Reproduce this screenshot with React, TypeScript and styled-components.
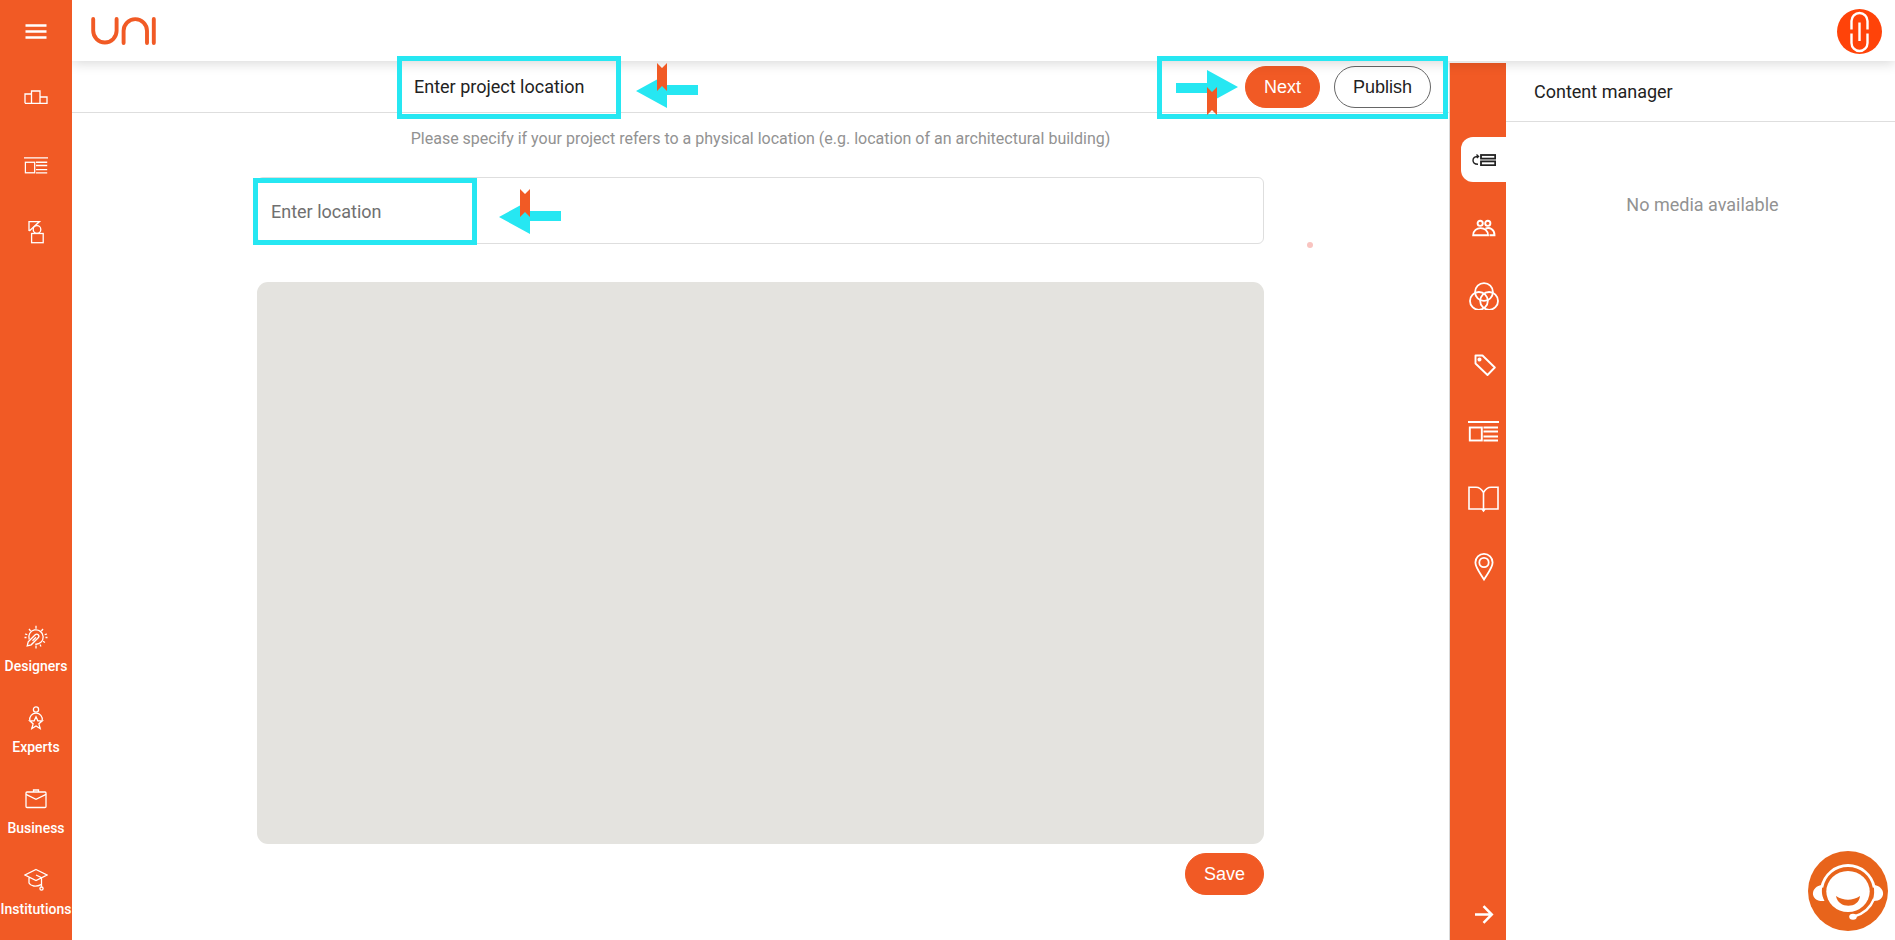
import React from "react";
import styled, { createGlobalStyle, css } from "styled-components";

const orange = "#f15a25";
const cyan = "#26e7f2";
const line = "#dedede";

const GlobalStyle = createGlobalStyle`
  *, *::before, *::after { box-sizing: border-box; }
  body {
    margin: 0;
    background: #fff;
    color: #222;
    font: 400 18px/24px Roboto, "Liberation Sans", sans-serif;
  }
  h1, h2, p { margin: 0; font-size: 18px; font-weight: 400; }
  button { font: inherit; cursor: pointer; border: 0; padding: 0; background: none; }
  svg { display: block; flex: none; }
`;

const Page = styled.div`
  display: grid;
  grid-template-columns: 72px minmax(0, 1fr);
  min-height: 100vh;
`;

const Sidebar = styled.nav`
  display: flex;
  flex-direction: column;
  justify-content: space-between;
  background: ${orange};
  color: #fff;
  padding: 9px 0 19px;
`;

const SideGroup = styled.div<{ $gap: number }>`
  display: flex;
  flex-direction: column;
  align-items: center;
  gap: ${(p) => p.$gap}px;
`;

const MenuButton = styled.button`
  display: grid;
  place-items: center;
  width: 44px;
  height: 44px;
  color: #fff;
`;

const SideLink = styled.a`
  display: flex;
  flex-direction: column;
  align-items: center;
  justify-content: center;
  gap: 5px;
  min-height: 44px;
  color: #fff;
  text-decoration: none;
  font-size: 14px;
  font-weight: 500;
  line-height: 24px;
`;

const Workspace = styled.div`
  display: flex;
  flex-direction: column;
  min-width: 0;
`;

const Header = styled.header`
  position: relative;
  z-index: 2;
  display: flex;
  align-items: center;
  justify-content: space-between;
  height: 61px;
  padding: 2px 13px 0 18px;
  background: #fff;
  box-shadow: 0 2px 12px rgba(0, 0, 0, 0.16);
  clip-path: inset(0 0 -24px 0);
`;

const Body = styled.div`
  display: flex;
  flex: 1;
`;

const Main = styled.main`
  display: flex;
  flex-direction: column;
  flex: 1;
  min-width: 0;
`;

const Toolbar = styled.div`
  display: grid;
  grid-template-columns: 1fr minmax(0, 693px) 1fr;
  height: 52px;
  padding-top: 1px;
  border-bottom: 1px solid ${line};
`;

const TitleBlock = styled.div`
  position: relative;
  grid-column: 2;
  display: flex;
  align-items: center;
`;

const Actions = styled.div`
  position: relative;
  display: flex;
  align-items: center;
  justify-content: flex-end;
  gap: 14px;
  padding-right: 18px;
`;

const PillButton = styled.button<{ $outline?: boolean }>`
  height: 42px;
  padding: 0 18px;
  border: 1px solid ${orange};
  border-radius: 21px;
  background: ${orange};
  color: #fff;
  font-family: "Liberation Sans", Arial, sans-serif;
  ${(p) =>
    p.$outline &&
    css`
      border-color: #666;
      background: #fff;
      color: #222;
    `}
`;

const Content = styled.section`
  display: flex;
  flex-direction: column;
  flex: 1;
  width: 100%;
  max-width: 1007px;
  margin: 0 auto;
  padding: 14px 0 45px;
`;

const Hint = styled.p`
  color: #929292;
  font-size: 16px;
  text-align: center;
`;

const Field = styled.div`
  position: relative;
  margin: 26px 0 38px;
`;

const LocationInput = styled.input`
  display: block;
  width: 100%;
  height: 67px;
  padding: 2px 13px 0;
  border: 1px solid ${line};
  border-radius: 6px;
  background: #fff;
  color: #222;
  font: inherit;
  &::placeholder { color: #707070; opacity: 1; }
`;

const MapArea = styled.div`
  flex: 1;
  min-height: 320px;
  border-radius: 11px;
  background: #e4e3df;
`;

const SaveRow = styled.div`
  display: flex;
  justify-content: flex-end;
  margin-top: 9px;
`;

const Callout = styled.div<{ $top: number; $left?: number; $right?: number; $width: number; $height: number }>`
  position: absolute;
  z-index: 3;
  top: ${(p) => p.$top}px;
  left: ${(p) => (p.$left === undefined ? "auto" : `${p.$left}px`)};
  right: ${(p) => (p.$right === undefined ? "auto" : `${p.$right}px`)};
  width: ${(p) => p.$width}px;
  height: ${(p) => p.$height}px;
  border: 5px solid ${cyan};
  pointer-events: none;
`;

const Pointer = styled.svg<{ $top: number; $left: number; $flip?: boolean }>`
  position: absolute;
  z-index: 3;
  top: ${(p) => p.$top}px;
  left: ${(p) => p.$left}px;
  transform: ${(p) => (p.$flip ? "rotate(180deg)" : "none")};
`;

const CursorDot = styled.span`
  position: absolute;
  top: 65px;
  right: -49px;
  width: 6px;
  height: 6px;
  border-radius: 50%;
  background: #f9c4c0;
`;

const Rail = styled.nav`
  display: flex;
  flex-direction: column;
  align-items: flex-end;
  gap: 23px;
  width: 57px;
  margin-top: 2px;
  padding: 74px 0 3px;
  border-left: 1px solid #d9d9d9;
  background: ${orange};
`;

const RailButton = styled.button<{ $active?: boolean; $last?: boolean }>`
  display: grid;
  place-items: center;
  width: 45px;
  height: 45px;
  border-radius: 12px 0 0 12px;
  color: ${(p) => (p.$active ? "#222" : "#fff")};
  background: ${(p) => (p.$active ? "#fff" : "transparent")};
  margin-top: ${(p) => (p.$last ? "auto" : "0")};
`;

const Panel = styled.aside`
  width: 389px;
`;

const PanelTitle = styled.h2`
  height: 61px;
  padding: 19px 28px 0;
  border-bottom: 1px solid ${line};
`;

const EmptyNote = styled.p`
  padding: 71px 0 0 4px;
  color: #929292;
  text-align: center;
`;

const SupportButton = styled.button`
  position: fixed;
  z-index: 4;
  right: 7px;
  bottom: 9px;
  width: 80px;
  height: 80px;
`;

type IconProps = { w: number; h: number; sw?: number; children: React.ReactNode };
const Icon = ({ w, h, sw = 1.3, children }: IconProps) => (
  <svg width={w} height={h} viewBox={`0 0 ${w} ${h}`} fill="none" stroke="currentColor" strokeWidth={sw} aria-hidden="true">
    {children}
  </svg>
);

const PodiumIcon = () => (
  <Icon w={24} h={16}>
    <path d="M1 13.300V4h6.500M7.500 13.300V1H16v12.300M16 7h7v6.300H1" />
  </Icon>
);
const ShapesIcon = () => (
  <Icon w={16} h={24}>
    <path d="M1 11V1.600h10.500L1.300 11" />
    <circle cx="9" cy="9.500" r="3.800" />
    <rect x="3.600" y="13.500" width="11.600" height="9.200" />
  </Icon>
);
const NewsIcon = ({ large = false }: { large?: boolean }) => (
  <svg width={large ? 31 : 24} height={large ? 21 : 17} viewBox="0 0 31 21" preserveAspectRatio="none" fill="none" stroke="currentColor" strokeWidth={large ? 1.9 : 1.6} aria-hidden="true">
    <path d="M0 1h31M15.500 6.500H30M15.500 10.500H30M15.500 15.500H30M15.500 19.500H30" />
    <rect x="1.800" y="6.500" width="12" height="13" />
  </svg>
);
const DesignerIcon = () => (
  <Icon w={24} h={24}>
    <path d="M5.200 14.500a7.200 7.200 0 1 1 6 4.700M12 .8v3M5 4l1.600 2M19 4l-1.600 2M1 9l2.300.7M23 9l-2.300.7M.5 12.500h2M21.500 12.500h2M21 17.500l-2-1.300M17 21.500l-1-2M12 20.500v3" />
    <path d="M3.200 20.800l1-4 7-7a2 2 0 0 1 3 3l-7 7-4 1zM8.500 15.800l3.500-3.500" />
  </Icon>
);
const ExpertIcon = () => (
  <Icon w={16} h={24}>
    <circle cx="8" cy="3.500" r="2.600" />
    <path d="M1.800 14.500a6.300 6.300 0 1 1 12.400 0" />
    <path d="M8 10.800l1.800 4h4.500l-3.400 3 1.300 4.700L8 20l-4.200 2.500 1.300-4.700-3.400-3h4.500z" />
  </Icon>
);
const BusinessIcon = () => (
  <Icon w={22} h={20}>
    <rect x="1" y="3" width="20" height="15.500" rx="1" />
    <path d="M8.500 3V1h5v2M1 5.300l10 5 10-5" />
  </Icon>
);
const InstitutionIcon = () => (
  <Icon w={24} h={24}>
    <path d="M12 1.500L23 7l-11 5.500L1 7zM12 7l5.500 2.600v9.200M5 9.800V15c1.500 3.200 7 4.300 12 1.600" />
    <circle cx="17.500" cy="20.600" r="1.600" />
  </Icon>
);
const ReorderIcon = () => (
  <Icon w={24} h={12} sw={1.8}>
    <rect x="9" y="1" width="14.200" height="3.600" />
    <rect x="9" y="7.400" width="14.200" height="3.800" />
    <path d="M6 10.200C2.800 10.200 1 8.500 1 6.200S2.800 2.400 6.500 2.400M4.500 .6L6.500 2.400 4.800 4" strokeWidth="1.400" />
  </Icon>
);
const PeopleIcon = () => (
  <Icon w={24} h={18} sw={1.9}>
    <circle cx="8.200" cy="4.300" r="2.600" />
    <circle cx="15.800" cy="4.300" r="2.600" />
    <path d="M1.200 16.200c0-9.500 14.800-9.500 14.800 0zM13.500 9.600c4-1.800 9 .8 9 6.600h-5" />
  </Icon>
);
const CirclesIcon = () => (
  <Icon w={30} h={28} sw={1.8}>
    <circle cx="15" cy="10" r="8.900" />
    <circle cx="9.900" cy="18.900" r="8.900" />
    <circle cx="20.100" cy="18.900" r="8.900" />
  </Icon>
);
const TagIcon = () => (
  <Icon w={24} h={24} sw={1.9}>
    <path d="M3.500 3.500h7l12.300 12-7.300 7.500L3.500 11.500z" strokeLinejoin="round" />
    <circle cx="7.500" cy="7.500" r="1.100" fill="currentColor" />
  </Icon>
);
const BookIcon = () => (
  <Icon w={31} h={27} sw={1.6}>
    <path d="M15.500 6.500C13 2 11 1.200 8 1.200H1v21.800h13l1.500 2 1.500-2h13V1.200h-7c-3 0-5 .8-7.500 5.300zV25" />
  </Icon>
);
const PinIcon = () => (
  <Icon w={20} h={30} sw={1.8}>
    <path d="M10 26.500C6 20 1.400 14.500 1.400 9.500a8.600 8.600 0 0 1 17.200 0c0 5-4.600 10.500-8.600 17z" />
    <circle cx="10" cy="9.500" r="4.700" />
  </Icon>
);
const ArrowIcon = () => (
  <Icon w={20} h={20} sw={2.5}>
    <path d="M1 9.500h17M9.500 1.200L17.800 9.500l-8.300 8.300" />
  </Icon>
);

const PointerArrow = (p: { top: number; left: number; flip?: boolean }) => (
  <Pointer $top={p.top} $left={p.left} $flip={p.flip} width="62" height="46" viewBox="0 0 62 46" aria-hidden="true">
    <path d="M0 28L31 11v11h31v10H31v13z" fill={cyan} />
    <path d="M21 0l5 5 5-5v28l-5-5-5 5z" fill={orange} />
  </Pointer>
);

const people = [
  { label: "Designers", icon: <DesignerIcon /> },
  { label: "Experts", icon: <ExpertIcon /> },
  { label: "Business", icon: <BusinessIcon /> },
  { label: "Institutions", icon: <InstitutionIcon /> },
];

const tools = [
  { label: "Arrange content", icon: <ReorderIcon /> },
  { label: "Team", icon: <PeopleIcon /> },
  { label: "Categories", icon: <CirclesIcon /> },
  { label: "Tags", icon: <TagIcon /> },
  { label: "Details", icon: <NewsIcon large /> },
  { label: "Publications", icon: <BookIcon /> },
  { label: "Location", icon: <PinIcon /> },
];

const IconSlot = styled.span`
  display: grid;
  place-items: center;
  height: 24px;
`;

export default function App() {
  return (
    <>
      <GlobalStyle />
      <Page>
        <Sidebar aria-label="Site">
          <SideGroup $gap={23}>
            <MenuButton aria-label="Menu">
              <Icon w={22} h={16} sw={2.4}>
                <path d="M.5 2.500h21M.5 8.500h21M.5 14.500h21" />
              </Icon>
            </MenuButton>
            <SideLink href="#competitions" aria-label="Competitions"><PodiumIcon /></SideLink>
            <SideLink href="#journal" aria-label="Journal"><NewsIcon /></SideLink>
            <SideLink href="#projects" aria-label="Projects"><ShapesIcon /></SideLink>
          </SideGroup>
          <SideGroup $gap={28}>
            {people.map((item) => (
              <SideLink key={item.label} href={`#${item.label.toLowerCase()}`}>
                <IconSlot>{item.icon}</IconSlot>
                {item.label}
              </SideLink>
            ))}
          </SideGroup>
        </Sidebar>

        <Workspace>
          <Header>
            <a href="#home" aria-label="Home">
              <svg width="68" height="30" viewBox="0 0 68 30" fill="none" stroke={orange} strokeWidth="3.900" strokeLinecap="round">
                <path d="M3.200 2v11.800a11.700 11.700 0 0 0 23.400 0V2M33.600 26V13.800a11.700 11.700 0 0 1 23.400 0V26M63.800 2v24" />
              </svg>
            </a>
            <button aria-label="Account">
              <svg width="45" height="45" viewBox="0 0 45 45" fill="none" stroke="#fff" strokeWidth="2.400">
                <circle cx="22.500" cy="22.500" r="22.500" fill="#ff4309" stroke="none" />
                <path d="M14.500 20.500V12a8 8 0 0 1 16 0v8.500M14.500 24.500V34a8 8 0 0 0 16 0v-9.500M22.500 13.500v18.500" />
              </svg>
            </button>
          </Header>

          <Body>
            <Main>
              <Toolbar>
                <TitleBlock>
                  <h1>Enter project location</h1>
                  <Callout $top={-6} $left={-17} $width={224} $height={63} />
                  <PointerArrow top={1} left={222} />
                </TitleBlock>
                <Actions>
                  <PillButton>Next</PillButton>
                  <PillButton $outline>Publish</PillButton>
                  <Callout $top={-6} $right={1} $width={291} $height={63}>
                    <PointerArrow top={8} left={14} flip />
                  </Callout>
                </Actions>
              </Toolbar>

              <Content>
                <Hint id="location-hint">
                  Please specify if your project refers to a physical location (e.g. location of an architectural building)
                </Hint>
                <Field>
                  <LocationInput aria-label="Location" aria-describedby="location-hint" placeholder="Enter location" />
                  <Callout $top={1} $left={-4} $width={224} $height={67} />
                  <PointerArrow top={12} left={242} />
                  <CursorDot />
                </Field>
                <MapArea role="region" aria-label="Map" />
                <SaveRow>
                  <PillButton>Save</PillButton>
                </SaveRow>
              </Content>
            </Main>

            <Rail aria-label="Project sections">
              {tools.map((tool, i) => (
                <RailButton key={tool.label} aria-label={tool.label} $active={i === 0}>{tool.icon}</RailButton>
              ))}
              <RailButton aria-label="Continue" $last><ArrowIcon /></RailButton>
            </Rail>

            <Panel>
              <PanelTitle>Content manager</PanelTitle>
              <EmptyNote>No media available</EmptyNote>
            </Panel>
          </Body>
        </Workspace>

        <SupportButton aria-label="Support">
          <svg width="80" height="80" viewBox="0 0 80 80" fill="none">
            <circle cx="40" cy="40" r="40" fill="#e8641b" />
            <ellipse cx="40" cy="40.500" rx="21.700" ry="20.500" fill="#fff" />
            <path d="M28 45c8 5 16 5 24 0-1 13-22 13-24 0z" fill="#e8641b" />
            <path d="M13.800 36.500a26.600 26.600 0 0 1 52.400 0" stroke="#fff" strokeWidth="2.800" />
            <path d="M14.500 34c-13 1-13 17.500 2 16-3-6-3-10-2-16zM65.500 34c13 1 13 17-1 16 2-6 2-10 1-16z" fill="#fff" />
            <path d="M66 48C62 58 55 63 46 65.500" stroke="#fff" strokeWidth="2.400" />
            <ellipse cx="45" cy="65.800" rx="3.800" ry="3" fill="#fff" />
          </svg>
        </SupportButton>
      </Page>
    </>
  );
}
